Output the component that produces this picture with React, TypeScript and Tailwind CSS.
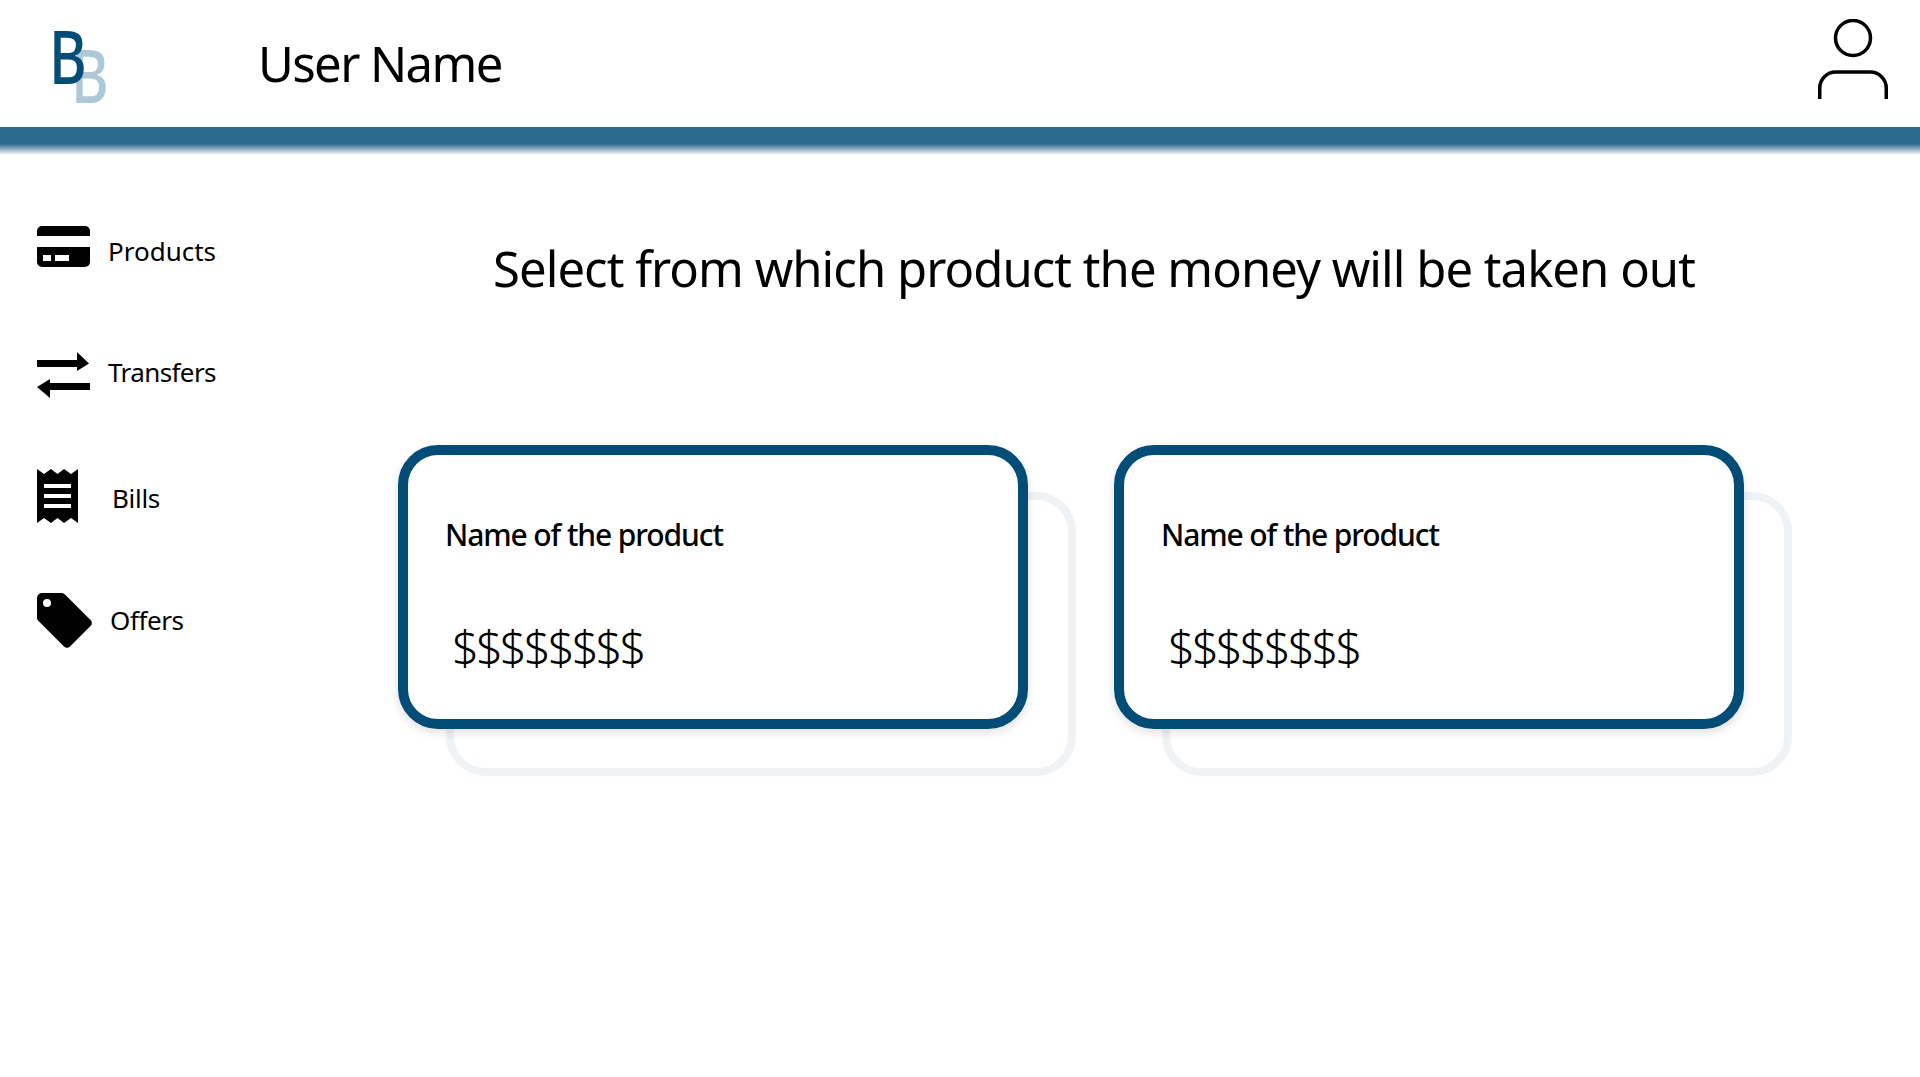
const font = "font-['Noto_Sans','Open_Sans',sans-serif]";

const navItems = [
  { label: "Products", icon: <CardIcon />, height: "h-[42px]", gap: "gap-[18px]", after: "mb-[84px]", text: "translate-y-[4px]" },
  { label: "Transfers", icon: <TransferIcon />, height: "h-[46px]", gap: "gap-[18px]", after: "mb-[70px]", text: "-translate-y-[3px] tracking-[-0.6px]" },
  { label: "Bills", icon: <BillIcon />, height: "h-[56px]", gap: "gap-[34px]", after: "mb-[69px]", text: "translate-y-[2px] tracking-[-0.3px]" },
  { label: "Offers", icon: <TagIcon />, height: "h-[56px]", gap: "gap-[17px]", after: "", text: "-translate-y-[1px] tracking-[-0.4px]" },
];

export default function App() {
  return (
    <div className={`min-h-[1077px] bg-white text-black ${font}`}>
      <header className="flex h-[127px] items-start justify-between pl-[52px] pr-[32px]">
        <div className="flex h-full items-center">
          <Logo />
          <h1 className="ml-[152px] text-[49px] leading-none tracking-[-1.6px]">User Name</h1>
        </div>
        <UserIcon />
      </header>
      <div className="h-[28px] bg-gradient-to-b from-[#2d6a8f] from-60% to-white" />
      <div className="flex">
        <nav className="w-[398px] shrink-0 pl-[37px] pt-[71px]">
          {navItems.map((item) => (
            <div key={item.label} className={`flex items-center ${item.height} ${item.gap} ${item.after}`}>
              {item.icon}
              <span className={`text-[26px] leading-none ${item.text}`}>{item.label}</span>
            </div>
          ))}
        </nav>
        <main className="flex-1 pt-[78px]">
          <h2 className="w-[1392px] text-center text-[49px] leading-[70px] tracking-[-0.95px]">
            Select from which product the money will be taken out
          </h2>
          <div className="mt-[142px] flex gap-[86px]">
            <ProductCard />
            <ProductCard />
          </div>
        </main>
      </div>
    </div>
  );
}

function ProductCard() {
  return (
    <div className="relative h-[284px] w-[630px]">
      <div className="absolute left-[48px] top-[47px] h-[284px] w-[630px] rounded-[40px] border-[8px] border-[#eff3f6]" />
      <div className="absolute inset-0 flex flex-col rounded-[40px] border-[10px] border-[#024c78] bg-white pl-[37px] shadow-[0_4px_10px_rgba(0,0,0,0.12)]">
        <p className="mt-[60px] text-[30px] font-medium leading-[40px] tracking-[-1.1px]">Name of the product</p>
        <p className="ml-[7px] mt-[62px] text-[47px] font-light leading-[60px] tracking-[-2.9px]">$$$$$$$$</p>
      </div>
    </div>
  );
}

function Logo() {
  return (
    <div className="relative h-[72px] w-[54px] text-[74px] font-medium leading-none">
      <span className="absolute left-[19px] top-[10px] origin-left scale-x-[0.78] text-[#aec8d8]">B</span>
      <span className="absolute left-[-3px] top-[-9px] origin-left scale-x-[0.78] text-[#024c78]">B</span>
    </div>
  );
}

function UserIcon() {
  return (
    <svg width="70" height="80" viewBox="0 0 70 80" fill="none" stroke="black" strokeWidth="3.5" className="mt-[19px]">
      <circle cx="35" cy="19" r="17.5" />
      <path d="M1.75 80 V69 a16 16 0 0 1 16 -16 H52.25 a16 16 0 0 1 16 16 V80" />
    </svg>
  );
}

function CardIcon() {
  return (
    <svg width="53" height="42" viewBox="0 0 53 42">
      <path d="M0 10 V5 a5 5 0 0 1 5 -5 H48 a5 5 0 0 1 5 5 V10 Z" />
      <path
        fillRule="evenodd"
        d="M0 21 H53 V36 a5 5 0 0 1 -5 5 H5 a5 5 0 0 1 -5 -5 Z M6 29 V35 H14 V29 Z M18 29 V35 H32 V29 Z"
      />
    </svg>
  );
}

function TransferIcon() {
  return (
    <svg width="53" height="46" viewBox="0 0 53 46">
      <path d="M0 8 H40 V0 L52 11.5 L40 19 V15 H0 Z" />
      <path d="M53 31 H13 V27 L0 35 L13 46 V38 H53 Z" />
    </svg>
  );
}

function BillIcon() {
  return (
    <svg width="41" height="56" viewBox="0 0 41 56">
      <path
        fillRule="evenodd"
        d="M0 1 L7 6 L14 1 L20.5 6 L27 1 L34 6 L41 1 V55 L34 50 L27 55 L20.5 50 L14 55 L7 50 L0 55 Z M7 16 V20 H34 V16 Z M7 26 V30 H34 V26 Z M7 36 V40 H34 V36 Z"
      />
    </svg>
  );
}

function TagIcon() {
  return (
    <svg width="56" height="56" viewBox="0 0 56 56">
      <path
        fillRule="evenodd"
        d="M5 0 H24 a5 5 0 0 1 4 1.5 L53.5 27 a4 4 0 0 1 0 6 L33 53.5 a4 4 0 0 1 -6 0 L1.5 28 a5 5 0 0 1 -1.5 -4 V5 a5 5 0 0 1 5 -5 Z M10 6 a4 4 0 1 0 0 8 a4 4 0 1 0 0 -8 Z"
      />
    </svg>
  );
}
